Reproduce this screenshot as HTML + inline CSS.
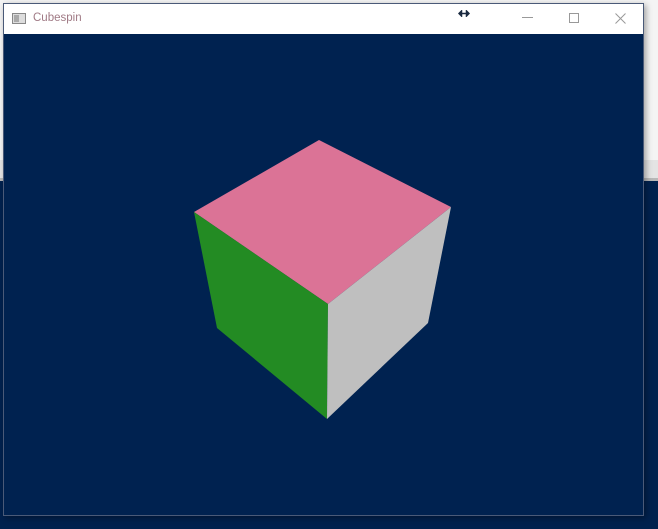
<!DOCTYPE html>
<html><head><style>
html,body{margin:0;padding:0;width:658px;height:529px;overflow:hidden;background:#00214e;position:relative;font-family:"Liberation Sans",sans-serif}
.bgtop{position:absolute;left:0;top:0;width:658px;height:160px;background:#f4f4f4}
.bgbar{position:absolute;left:0;top:160px;width:658px;height:18px;background:#e4e4e4}
.bgline{position:absolute;left:0;top:178px;width:658px;height:3px;background:#b8b8b8}
.win{position:absolute;left:3px;top:3px;width:639px;height:511px;border:1px solid #4a5a78;background:#002250;box-shadow:2px 2px 6px rgba(0,0,0,.35)}
.title{position:absolute;left:0;top:0;width:639px;height:30px;background:#fff}
.title span{position:absolute;left:29px;top:8px;font-size:11.5px;color:#a07a85}
</style></head><body>
<div class="bgtop"></div><div class="bgbar"></div><div class="bgline"></div>
<div class="win">
<div class="title">
<svg style="position:absolute;left:8px;top:9px" width="14" height="11"><rect x="0.5" y="0.5" width="13" height="10" fill="#ddd" stroke="#888"/><rect x="2" y="2" width="5" height="7" fill="#aaa"/></svg>
<span>Cubespin</span>
<svg style="position:absolute;left:454px;top:6px" width="12" height="7"><path d="M1 3.5H11M1 3.5L3.5 1V6ZM11 3.5L8.5 1V6Z" stroke="#1a2a40" stroke-width="1.5" fill="#1a2a40"/></svg>
<svg style="position:absolute;left:518px;top:12px" width="12" height="3"><path d="M0 1.5H11" stroke="#999" stroke-width="1"/></svg>
<svg style="position:absolute;left:565px;top:9px" width="11" height="11"><rect x="0.5" y="0.5" width="9" height="9" fill="none" stroke="#999"/></svg>
<svg style="position:absolute;left:611px;top:9px" width="11" height="11"><path d="M0.5 0.5L10.5 10.5M10.5 0.5L0.5 10.5" stroke="#999"/></svg>
</div>
</div>
<svg style="position:absolute;left:0;top:0" width="658" height="529">
<polygon points="194,212 319,140 451,207 328,304" fill="#db7396"/>
<polygon points="194,212 328,304 327,419 217,328" fill="#238b23"/>
<polygon points="328,304 451,207 428,323 327,419" fill="#bfbfbf"/>
</svg>
</body></html>
